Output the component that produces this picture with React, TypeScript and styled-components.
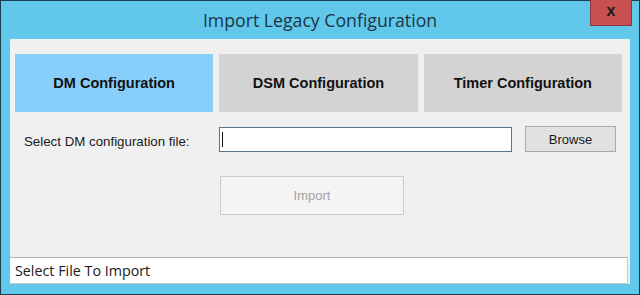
import React from 'react';
import styled, { createGlobalStyle } from 'styled-components';

const GlobalStyle = createGlobalStyle`
  html, body {
    margin: 0;
    padding: 0;
    background: #ffffff;
  }
`;

const Window = styled.div`
  width: 640px;
  height: 295px;
  box-sizing: border-box;
  border: 1px solid #1d3c4c;
  background: #62c8eb;
  display: flex;
  flex-direction: column;
  padding: 0 9px 10px 9px;
  position: relative;
`;

const TitleBar = styled.div`
  height: 37px;
  display: flex;
  align-items: center;
  justify-content: center;
  font-family: 'Open Sans', 'Noto Sans', sans-serif;
  font-size: 17.7px;
  color: #1c3444;
  padding-bottom: 1px;
`;

const CloseButton = styled.div`
  position: absolute;
  top: -1px;
  right: 7px;
  width: 42px;
  height: 26px;
  box-sizing: border-box;
  background: #c75050;
  border: 1px solid #8a3a3a;
  border-top: none;
  display: flex;
  align-items: center;
  justify-content: center;
  font-family: 'Liberation Sans', Arial, sans-serif;
  font-weight: bold;
  font-size: 16px;
  color: #1a1a1a;
  line-height: 1;
  padding-bottom: 3px;
`;

const Client = styled.div`
  flex: 1;
  background: #f0f0f0;
  display: flex;
  flex-direction: column;
`;

const Body = styled.div`
  flex: 1;
  padding: 15px 8px 0 5px;
`;

const Tabs = styled.div`
  display: grid;
  grid-template-columns: repeat(3, 1fr);
  gap: 6px;
`;

const Tab = styled.div<{ $active?: boolean }>`
  height: 58px;
  background: ${(p) => (p.$active ? '#87cefa' : '#d3d3d3')};
  display: flex;
  align-items: center;
  justify-content: center;
  font-family: 'Liberation Sans', Arial, sans-serif;
  font-weight: bold;
  font-size: 14.5px;
  color: #111;
`;

const FormRow = styled.div`
  display: flex;
  align-items: center;
  margin-top: 14px;
  padding-left: 9px;
`;

const Label = styled.div`
  width: 195px;
  font-family: 'Liberation Sans', Arial, sans-serif;
  font-size: 13.3px;
  color: #1a1a1a;
  padding-top: 4px;
`;

const TextInput = styled.div`
  width: 293px;
  height: 25px;
  box-sizing: border-box;
  background: #ffffff;
  border: 1px solid #5b7486;
  display: flex;
  align-items: center;
  padding-left: 2px;
`;

const Caret = styled.div`
  width: 1px;
  height: 15px;
  background: #111;
`;

const BrowseButton = styled.div`
  margin-left: 13px;
  width: 91px;
  height: 26px;
  box-sizing: border-box;
  background: #e1e1e1;
  border: 1px solid #a9a9a9;
  display: flex;
  align-items: center;
  justify-content: center;
  font-family: 'Liberation Sans', Arial, sans-serif;
  font-size: 13px;
  color: #1a1a1a;
`;

const ImportRow = styled.div`
  margin-top: 24px;
  padding-left: 205px;
`;

const ImportButton = styled.div`
  width: 184px;
  height: 39px;
  box-sizing: border-box;
  background: #f4f4f4;
  border: 1px solid #cccccc;
  display: flex;
  align-items: center;
  justify-content: center;
  font-family: 'Liberation Sans', Arial, sans-serif;
  font-size: 13px;
  color: #a3a3a3;
`;

const StatusBar = styled.div`
  height: 27px;
  box-sizing: border-box;
  margin-right: 2px;
  background: #ffffff;
  border-top: 1px solid #b4b4b4;
  border-right: 1px solid #c8c8c8;
  border-bottom: 1px solid #c8c8c8;
  display: flex;
  align-items: center;
  padding-left: 5px;
  font-family: 'Open Sans', 'Noto Sans', sans-serif;
  font-size: 14.3px;
  color: #1a1a1a;
`;

export default function App() {
  return (
    <>
      <GlobalStyle />
      <Window>
        <TitleBar>Import Legacy Configuration</TitleBar>
        <CloseButton>x</CloseButton>
        <Client>
          <Body>
            <Tabs>
              <Tab $active>DM Configuration</Tab>
              <Tab>DSM Configuration</Tab>
              <Tab>Timer Configuration</Tab>
            </Tabs>
            <FormRow>
              <Label>Select DM configuration file:</Label>
              <TextInput>
                <Caret />
              </TextInput>
              <BrowseButton>Browse</BrowseButton>
            </FormRow>
            <ImportRow>
              <ImportButton>Import</ImportButton>
            </ImportRow>
          </Body>
          <StatusBar>Select File To Import</StatusBar>
        </Client>
      </Window>
    </>
  );
}
